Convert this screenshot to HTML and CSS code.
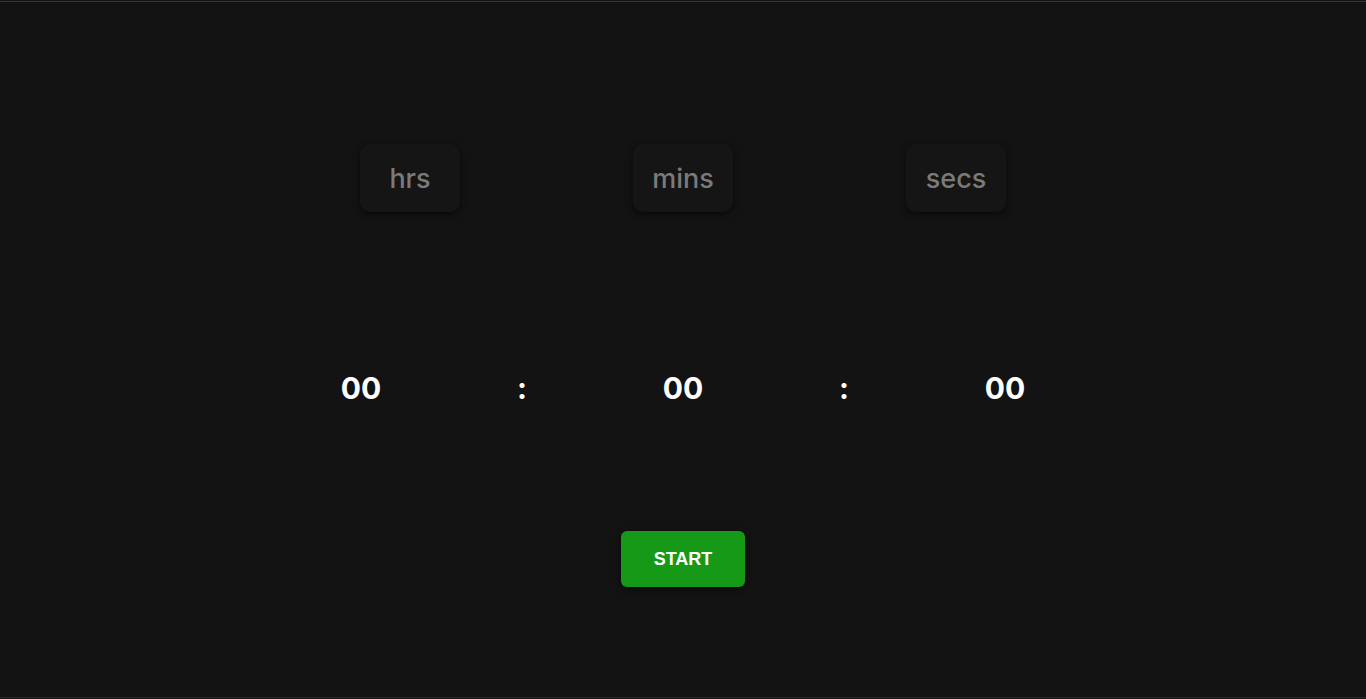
FILE: index.html
```html
<!DOCTYPE html>
<html>
<head>
<meta charset="utf-8">
<link rel="stylesheet" href="styles.css">
</head>
<body>
<div class="page">
  <div class="labels">
    <div class="label">hrs</div>
    <div class="label">mins</div>
    <div class="label">secs</div>
  </div>
  <div class="time">
    <span class="cell">00</span>
    <span class="cell">:</span>
    <span class="cell">00</span>
    <span class="cell">:</span>
    <span class="cell">00</span>
  </div>
  <button class="start">START</button>
</div>
</body>
</html>
```

FILE: styles.css
```css
html, body {
  margin: 0;
  padding: 0;
  background: #131313;
}
body {
  padding-top: 1px;
}
.page {
  height: 695px;
  border-top: 1px solid #383546;
  border-bottom: 1px solid #2a2a2a;
  display: flex;
  flex-direction: column;
  align-items: center;
}
.labels {
  display: flex;
  gap: 173px;
  margin-top: 142px;
}
.label {
  width: 100px;
  height: 68px;
  box-sizing: border-box;
  border-radius: 10px;
  background: #151515;
  box-shadow: 0 2px 6px rgba(0,0,0,0.6);
  display: flex;
  align-items: center;
  justify-content: center;
  font-family: Inter, sans-serif;
  font-weight: 500;
  font-size: 27px;
  color: #7a7a7a;
}
.time {
  display: flex;
  margin-top: 154px;
  height: 44px;
  align-items: center;
}
.cell {
  width: 161px;
  text-align: center;
  font-family: Inter, sans-serif;
  font-weight: 700;
  font-size: 30px;
  color: #ffffff;
}
.start {
  margin-top: 121px;
  width: 124px;
  height: 56px;
  border: none;
  border-radius: 6px;
  background: #169916;
  color: #ffffff;
  font-family: "Liberation Sans", Arial, sans-serif;
  font-weight: 700;
  font-size: 18px;
  box-shadow: 0 2px 6px rgba(0,0,0,0.5);
  padding: 0;
}
```
